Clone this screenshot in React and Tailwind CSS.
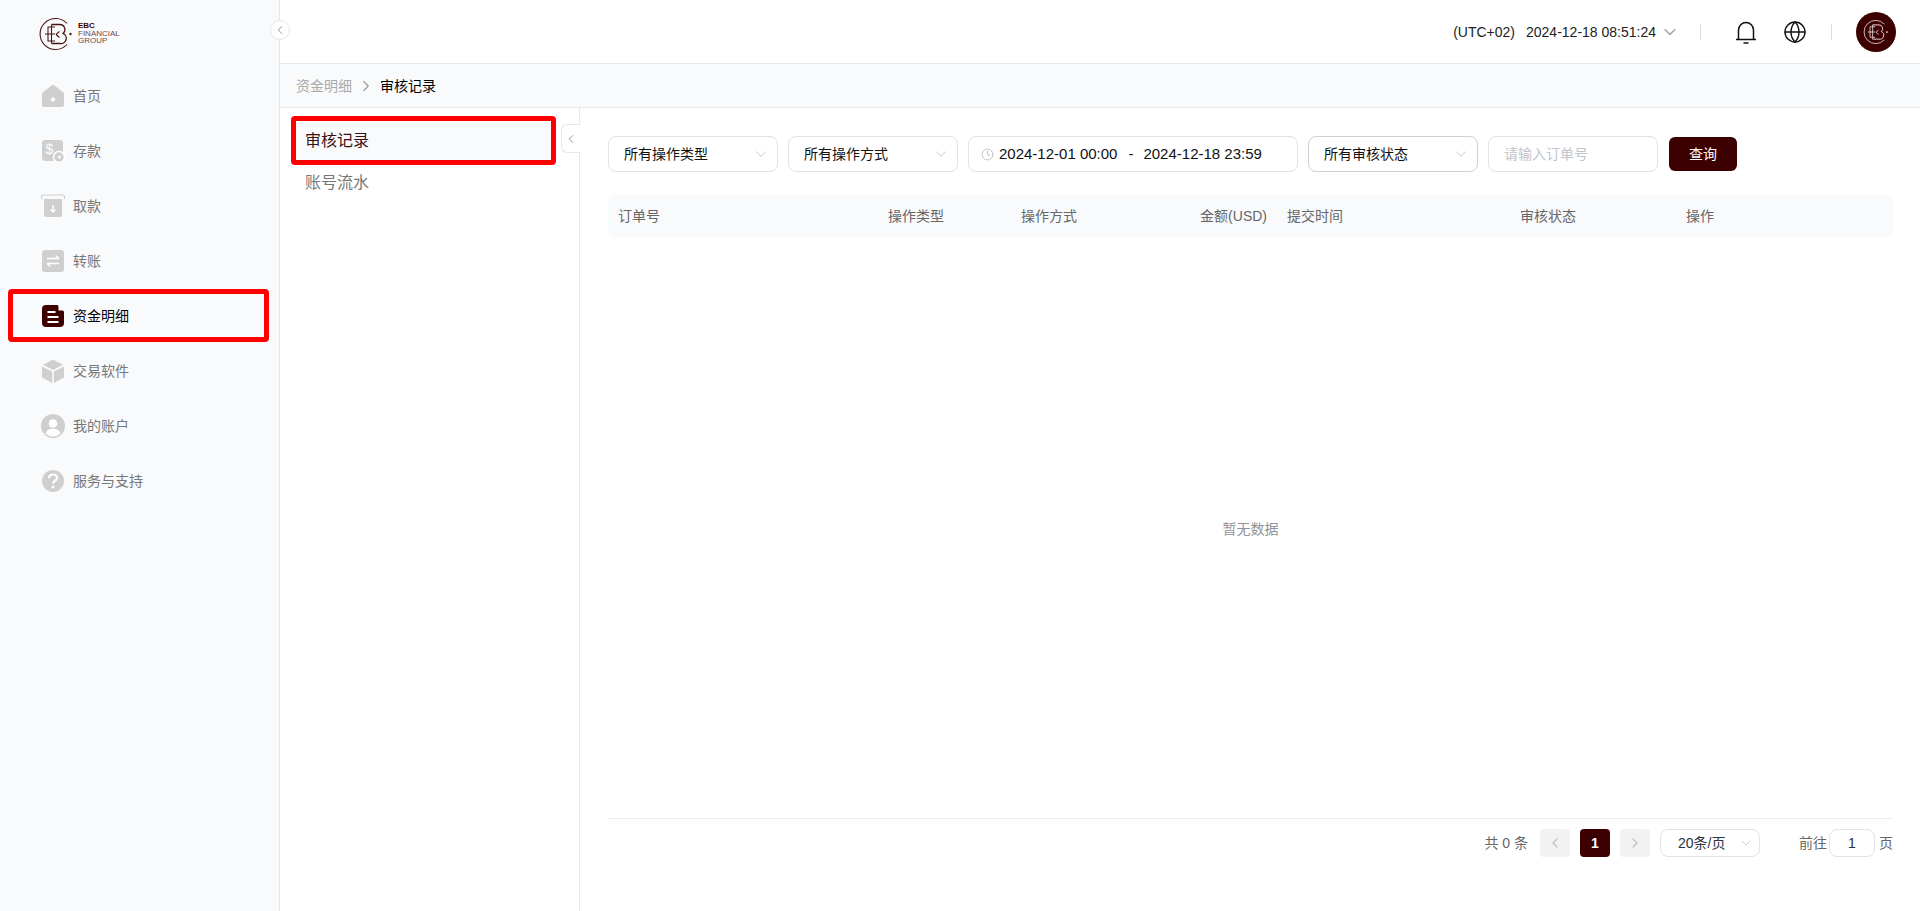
import React from 'react';
import { ChevronDown, ChevronLeft, ChevronRight, Globe, Clock } from 'lucide-react';

const LogoMark = ({ color = '#4a1414', className = '' }) => (
  <svg viewBox="0 0 32 32" fill="none" stroke={color} className={className}>
    <path d="M27 5.500A15.500 15.500 0 1 0 27 26.500" strokeWidth="1.100" />
    <path d="M15 9H8v14h7M5 16h10M11.500 6.500v19" strokeWidth="1.100" />
    <path d="M11.500 6.500h8.500a5 5 0 0 1 3 8.900a5.300 5.300 0 0 1-3 10.100h-8.500" strokeWidth="1.300" />
    <path d="M16 16.500l3.500-3.200M16 16.500l3.500 3" strokeWidth="1.100" />
    <path d="M30.500 14.500l1.500 1.500-1.500 1.500-1.500-1.500z" fill={color} stroke="none" />
  </svg>
);

const HomeIcon = () => (
  <svg viewBox="0 0 24 24" className="h-6 w-6">
    <path d="M11 1.200a1.600 1.600 0 0 1 2 0l9.200 7a1.800 1.800 0 0 1 .8 1.500V21a2 2 0 0 1-2 2H3a2 2 0 0 1-2-2V9.700a1.800 1.800 0 0 1 .8-1.500z" fill="#cfcfcf" />
    <path d="M12 13v5M9.500 15.500h5" stroke="#fff" strokeWidth="1.600" />
  </svg>
);

const DepositIcon = () => (
  <svg viewBox="0 0 24 24" className="h-6 w-6">
    <rect x="1" y="1" width="21" height="21" rx="3" fill="#cfcfcf" />
    <text x="4.500" y="15" fontSize="14" fill="#fff" fontFamily="Liberation Sans, sans-serif">$</text>
    <circle cx="18" cy="18" r="5.500" fill="#cfcfcf" stroke="#fff" strokeWidth="1.500" />
    <path d="M19.500 15.800v4.400L16.500 18z" fill="#fff" />
  </svg>
);

const WithdrawIcon = () => (
  <svg viewBox="0 0 24 24" className="h-6 w-6">
    <path d="M0.500 5V3a2 2 0 0 1 2-2h19a2 2 0 0 1 2 2v2" fill="none" stroke="#cfcfcf" strokeWidth="1.200" />
    <path d="M3 5h18v16a2 2 0 0 1-2 2H5a2 2 0 0 1-2-2z" fill="#cfcfcf" />
    <path d="M12 11v7M9.500 15.500L12 18l2.500-2.500" fill="none" stroke="#fff" strokeWidth="1.500" />
  </svg>
);

const TransferIcon = () => (
  <svg viewBox="0 0 24 24" className="h-6 w-6">
    <rect x="1" y="1" width="22" height="22" rx="3" fill="#cfcfcf" />
    <path d="M6 9.500h12M14.500 6.500l3.500 3M18 14.500H6M9.500 17.500L6 14.500" fill="none" stroke="#fff" strokeWidth="1.600" />
  </svg>
);

const DetailIcon = () => (
  <svg viewBox="0 0 24 24" className="h-6 w-6">
    <path d="M5 1h11.500L23 7.500V19a4 4 0 0 1-4 4H5a4 4 0 0 1-4-4V5a4 4 0 0 1 4-4z" fill="#3d0000" />
    <path d="M17.500 1.500l5 5h-5z" fill="#fff" />
    <path d="M6.500 8h8M6.500 13h11M6.500 18h11" stroke="#fff" strokeWidth="2" />
  </svg>
);

const CubeIcon = () => (
  <svg viewBox="0 0 24 24" className="h-6 w-6">
    <path d="M12 0.500l10 5.200L12 11 2 5.700z" fill="#cfcfcf" />
    <path d="M1 7.500l10.200 5.300V24L1 18.500z" fill="#cfcfcf" />
    <path d="M23 7.500l-10.200 5.300V24L23 18.500z" fill="#cfcfcf" />
  </svg>
);

const UserIcon = () => (
  <svg viewBox="0 0 24 24" className="h-6 w-6">
    <circle cx="12" cy="12" r="12" fill="#cfcfcf" />
    <circle cx="12" cy="9.500" r="4.300" fill="#fff" />
    <path d="M4.500 19.500c1-3.500 4-4.800 7.500-4.800s6.500 1.300 7.500 4.800a11 11 0 0 1-15 0z" fill="#fff" />
  </svg>
);

const HelpIcon = () => (
  <svg viewBox="0 0 24 24" className="h-6 w-6">
    <circle cx="12" cy="12" r="11" fill="#cfcfcf" />
    <path d="M8 9.200c0-2.400 1.800-3.700 4-3.700s4 1.300 4 3.400c0 2.900-4 2.900-4 5.600" fill="none" stroke="#fff" strokeWidth="2.200" />
    <circle cx="12" cy="18" r="1.400" fill="#fff" />
  </svg>
);

const BellIcon = () => (
  <svg viewBox="0 0 22 24" fill="none" stroke="#111" strokeWidth="1.500" className="h-6 w-[22px]">
    <path d="M1 19.500h20M3.500 19.500V10a7.500 7.500 0 0 1 15 0v9.500" />
    <path d="M8.500 23h5" />
  </svg>
);

const navItems = [
  { label: '首页', icon: <HomeIcon /> },
  { label: '存款', icon: <DepositIcon /> },
  { label: '取款', icon: <WithdrawIcon /> },
  { label: '转账', icon: <TransferIcon /> },
  { label: '资金明细', icon: <DetailIcon />, active: true },
  { label: '交易软件', icon: <CubeIcon /> },
  { label: '我的账户', icon: <UserIcon /> },
  { label: '服务与支持', icon: <HelpIcon /> },
];

const columns = [
  { label: '订单号' },
  { label: '操作类型' },
  { label: '操作方式' },
  { label: '金额(USD)', right: true },
  { label: '提交时间' },
  { label: '审核状态' },
  { label: '操作' },
];

const Select = ({ label, dark }) => (
  <div className={`flex h-9 w-[170px] items-center justify-between rounded-lg border bg-white pl-[15px] pr-[7px] text-sm text-[#111] ${dark ? 'border-[#d0d1d8]' : 'border-[#e0e1ea]'}`}>
    <span>{label}</span>
    <ChevronDown className="h-[18px] w-[18px] text-[#c0c4cc]" strokeWidth={1.2} />
  </div>
);

const App = () => {
  return (
    <div className="flex h-screen overflow-hidden bg-white font-['Liberation_Sans','Noto_Sans_CJK_SC',sans-serif] text-sm">
      {/* Sidebar */}
      <aside className="relative w-[280px] shrink-0 border-r border-[#e6e7ec] bg-[#f9fafc]">
        <div className="flex h-[68px] items-start pl-[40px] pt-[18px]">
          <LogoMark className="h-8 w-8 overflow-visible" />
          <div className="ml-[6px] mt-[4px] text-[8px] leading-[7.5px] text-[#6d4a4a]">
            <div className="font-bold text-[#3d0000]">EBC</div>
            <div>FINANCIAL</div>
            <div>GROUP</div>
          </div>
        </div>
        <nav>
          {navItems.map((item) =>
            item.active ? (
              <div key={item.label} className="mx-2 my-px flex h-[53px] w-[261px] items-center gap-2 rounded-sm border-[5px] border-[#ff0000] pl-[28px] text-black">
                {item.icon}
                <span>{item.label}</span>
              </div>
            ) : (
              <div key={item.label} className="flex h-[55px] items-center gap-2 pl-[41px] text-[#777]">
                {item.icon}
                <span>{item.label}</span>
              </div>
            )
          )}
        </nav>
        <button className="absolute left-[270px] top-[20px] flex h-5 w-5 items-center justify-center rounded-full border border-[#e6e7ec] bg-white text-[#888]">
          <ChevronLeft className="h-3.5 w-3.5" strokeWidth={1.5} />
        </button>
      </aside>

      <div className="flex min-w-0 flex-1 flex-col">
        {/* Top bar */}
        <header className="flex h-16 shrink-0 items-center justify-end border-b border-[#e6e7ec] pr-6">
          <span className="text-[#222]">(UTC+02)</span>
          <span className="ml-[11px] text-[#222]">2024-12-18 08:51:24</span>
          <ChevronDown className="ml-1 h-5 w-5 text-[#999]" strokeWidth={1.3} />
          <div className="ml-5 h-4 w-px bg-[#ddd]" />
          <div className="ml-[34px]"><BellIcon /></div>
          <Globe className="ml-[26px] h-6 w-6 text-[#111]" strokeWidth={1.4} />
          <div className="ml-6 h-4 w-px bg-[#ddd]" />
          <div className="ml-6 flex h-10 w-10 items-center justify-center rounded-full bg-[#3d0000]">
            <LogoMark color="#e8dcdc" className="h-6 w-6 overflow-visible" />
          </div>
        </header>

        {/* Breadcrumb */}
        <div className="flex h-11 shrink-0 items-center border-b border-[#e6e7ec] bg-[#f9fafc] pl-4">
          <span className="text-[#aaa]">资金明细</span>
          <ChevronRight className="mx-[5px] h-[18px] w-[18px] text-[#999]" strokeWidth={1.5} />
          <span className="text-black">审核记录</span>
        </div>

        <div className="flex min-h-0 flex-1">
          {/* Sub menu */}
          <div className="relative w-[300px] shrink-0 border-r border-[#e6e7ec] pl-[11px] pt-2">
            <div className="flex h-[49px] w-[265px] items-center rounded-sm border-[5px] border-[#ff0000] bg-[#f9fafc] pl-[9px] text-base text-[#3d1010]">
              审核记录
            </div>
            <div className="flex h-9 items-center pl-[14px] text-base text-[#777]">账号流水</div>
            <button className="absolute right-[-1px] top-4 flex h-[29px] w-[19px] items-center justify-center rounded-l-md border border-r-0 border-[#e6e7ec] bg-white text-[#888]">
              <ChevronLeft className="h-3.5 w-3.5" strokeWidth={1.5} />
            </button>
          </div>

          {/* Content */}
          <main className="flex min-w-0 flex-1 flex-col pb-[54px] pl-7 pr-[27px] pt-7">
            <div className="flex items-center gap-2.5">
              <Select label="所有操作类型" />
              <Select label="所有操作方式" />
              <div className="flex h-9 w-[330px] items-center rounded-lg border border-[#e0e1ea] pl-3 text-[15px] text-[#111]">
                <Clock className="h-[13px] w-[13px] text-[#b8bcc6]" strokeWidth={1.7} />
                <span className="ml-[5px]">2024-12-01 00:00</span>
                <span className="ml-[11px]">-</span>
                <span className="ml-2.5">2024-12-18 23:59</span>
              </div>
              <Select label="所有审核状态" dark />
              <div className="flex h-9 w-[170px] items-center rounded-lg border border-[#e0e1ea] pl-[15px] text-[#c0c4cc]">请输入订单号</div>
              <button className="ml-px h-[34px] w-[68px] rounded-md bg-[#3d0000] text-white">查询</button>
            </div>

            <div className="mt-[23px] grid h-[42px] shrink-0 grid-cols-[270px_133px_133px_133px_233px_166px_1fr] items-center rounded-lg bg-[#f9fafc] text-[#666]">
              {columns.map((col) => (
                <div key={col.label} className={col.right ? 'pr-2.5 text-right' : 'pl-2.5'}>{col.label}</div>
              ))}
            </div>

            <div className="flex flex-1 items-center justify-center pt-[3px] text-[#909399]">暂无数据</div>

            <div className="flex h-[39px] shrink-0 items-end justify-end border-t border-[#ebecf2] text-[#666]">
              <div className="flex h-7 items-center">
                <span>共 0 条</span>
                <button className="ml-3 flex h-7 w-[30px] items-center justify-center rounded-sm bg-[#f2f2f2] text-[#c0c4cc]">
                  <ChevronLeft className="h-4 w-4" strokeWidth={2} />
                </button>
                <button className="ml-2.5 h-7 w-[30px] rounded-sm bg-[#3d0000] font-bold text-white">1</button>
                <button className="ml-2.5 flex h-7 w-[30px] items-center justify-center rounded-sm bg-[#f2f2f2] text-[#c0c4cc]">
                  <ChevronRight className="h-4 w-4" strokeWidth={2} />
                </button>
                <div className="relative ml-2.5 flex h-7 w-[100px] items-center rounded-lg border border-[#e0e1ea] pl-[17px] text-[#2b3340]">
                  20条/页
                  <ChevronDown className="absolute right-[5px] top-[5px] h-4 w-4 text-[#c0c4cc]" strokeWidth={1.2} />
                </div>
                <span className="ml-[39px]">前往</span>
                <div className="ml-0.5 flex h-7 w-[46px] items-center justify-center rounded-lg border border-[#e0e1ea] text-[#2b3340]">1</div>
                <span className="ml-1">页</span>
              </div>
            </div>
          </main>
        </div>
      </div>
    </div>
  );
};

export default App;
